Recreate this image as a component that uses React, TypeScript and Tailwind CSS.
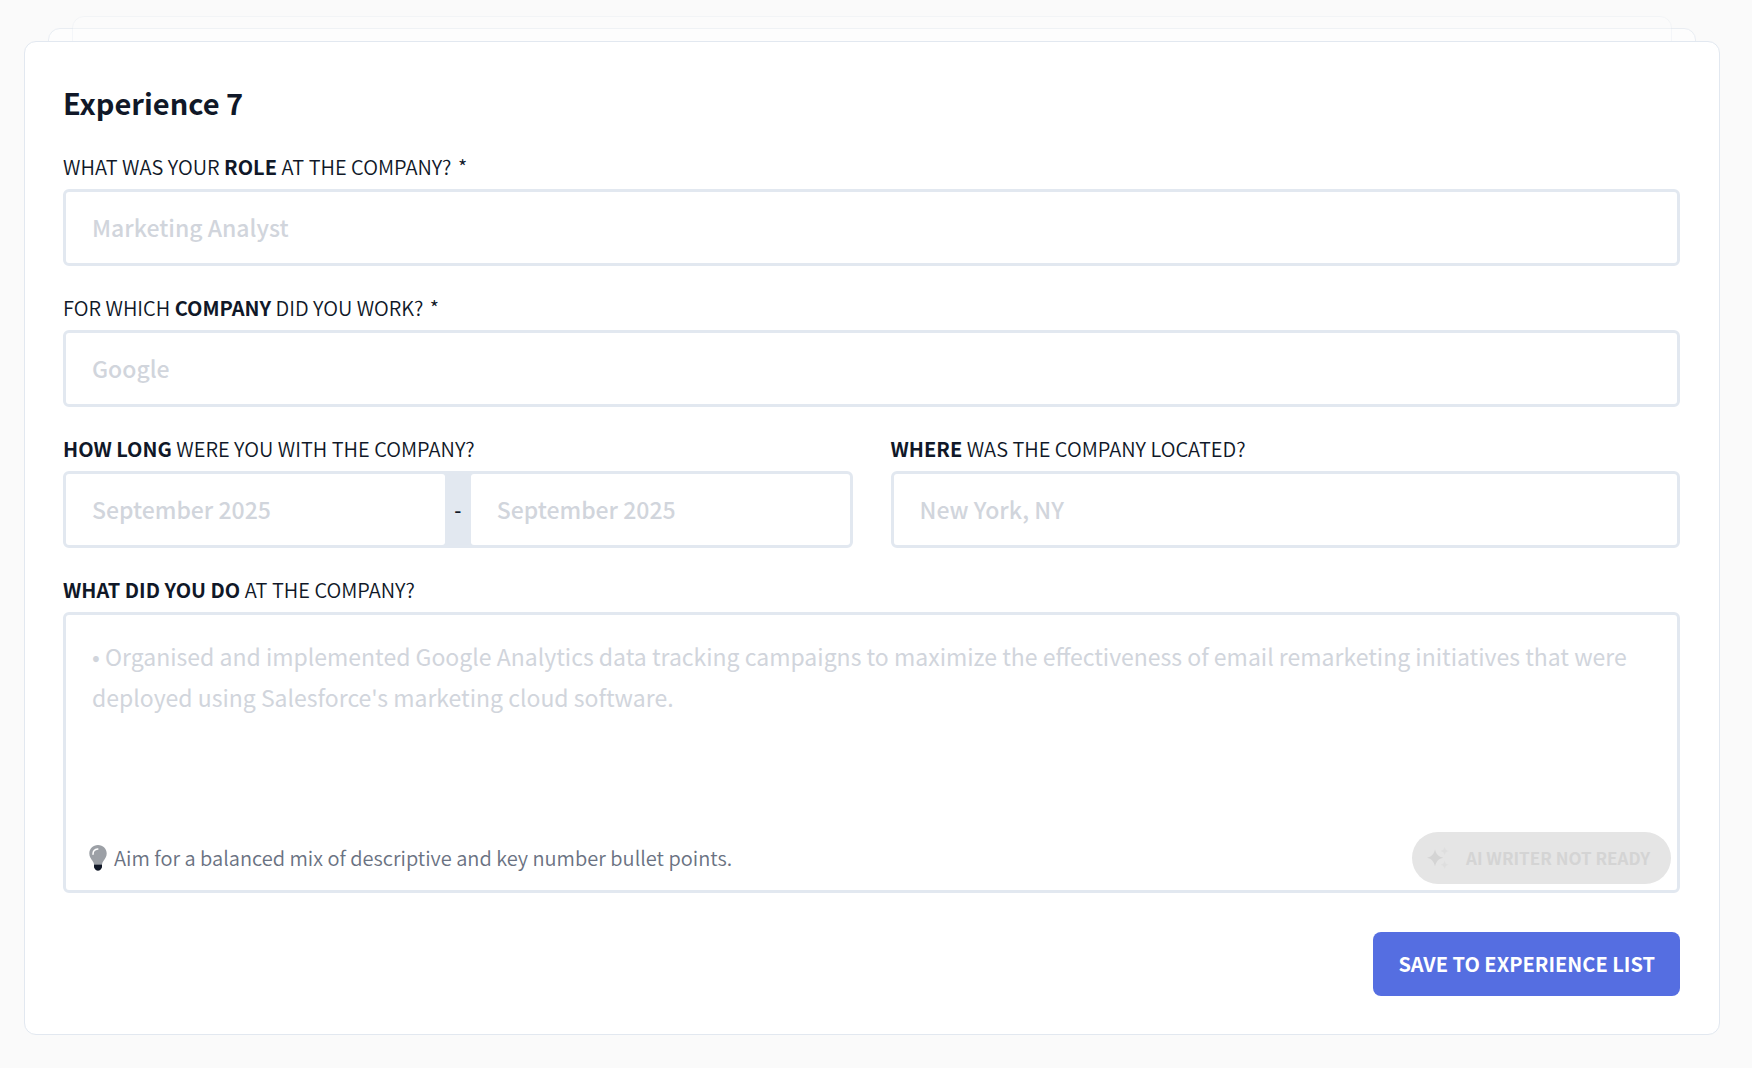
import type { InputHTMLAttributes, ReactNode } from "react";

function FieldLabel({ htmlFor, children }: { htmlFor: string; children: ReactNode }) {
  return (
    <label htmlFor={htmlFor} className="mb-[7px] block text-[20px] leading-[30px] font-[350] uppercase">
      {children}
    </label>
  );
}

function Key({ children }: { children: ReactNode }) {
  return <strong className="font-bold">{children}</strong>;
}

const inputText =
  "w-full min-w-0 bg-white px-[26px] pb-0.5 text-[23px] leading-[36px] font-medium outline-none placeholder:text-gray-300";

function TextField(props: InputHTMLAttributes<HTMLInputElement>) {
  return (
    <input
      type="text"
      {...props}
      className={`${inputText} h-[77px] rounded-md border-3 border-slate-200 focus:border-indigo-400`}
    />
  );
}

function BulbIcon() {
  return (
    <svg viewBox="0 0 18 26" className="h-[26px] w-[18px] shrink-0" aria-hidden="true">
      <path
        d="M9 0C3.9 0 .3 3.8.3 8.6c0 3.2 1.700 5.200 3.100 7.100.9 1.300 1.400 2.400 1.600 3.900h8c.2-1.500.7-2.600 1.600-3.900 1.400-1.900 3.100-3.900 3.100-7.100C17.700 3.800 14.100 0 9 0Z"
        fill="#9ca0a6"
      />
      <path d="M4 9.200C4 6.300 6 4.200 8.800 4" fill="none" stroke="#fff" strokeWidth="1.500" strokeLinecap="round" />
      <path d="M5 19.600h8v2.500c0 .8-.5 1.300-1 1.900-.7 1-1.500 1.700-3 1.700s-2.300-.7-3-1.700c-.5-.6-1-1.100-1-1.900Z" fill="#111827" />
    </svg>
  );
}

function SparklesIcon() {
  return (
    <svg viewBox="0 0 22 22" className="size-[22px] shrink-0" fill="currentColor" aria-hidden="true">
      <path d="M8 2.500c1.300 5 3.500 7.100 8.300 8.300C11.500 12 9.300 14.200 8 19.300 6.700 14.200 4.600 12 0 10.800 4.600 9.600 6.700 7.500 8 2.500Z" />
      <path
        opacity=".4"
        d="M17.600 0c.6 2.400 1.600 3.400 3.900 4-2.300.6-3.300 1.600-3.900 4-.6-2.400-1.600-3.400-3.900-4 2.300-.6 3.300-1.600 3.900-4ZM17.600 13.700c.6 2.400 1.600 3.400 3.900 4-2.300.6-3.300 1.600-3.900 4-.6-2.400-1.600-3.400-3.900-4 2.300-.6 3.300-1.600 3.900-4Z"
      />
    </svg>
  );
}

export default function App() {
  return (
    <main className="min-h-screen bg-[#fafafa] pt-4 pr-8 pb-8 pl-6 font-['Noto_Sans_CJK_KR',sans-serif] text-gray-900">
      <div className="relative pt-[25px]">
        <div className="absolute inset-x-6 top-3 h-24 rounded-xl border border-slate-200 bg-white opacity-70" />
        <div className="absolute inset-x-12 top-0 h-24 rounded-xl border border-slate-200 bg-white opacity-30" />

        <form className="relative flex flex-col gap-[27px] rounded-xl border border-slate-200 bg-white pt-[38px] pr-[39px] pb-[38px] pl-[38px]">
          <h2 className="text-[29px] leading-[45px] font-bold">Experience 7</h2>

          <div>
            <FieldLabel htmlFor="role">
              What was your <Key>role</Key> at the company? <span className="ml-0.5">*</span>
            </FieldLabel>
            <TextField id="role" placeholder="Marketing Analyst" required />
          </div>

          <div>
            <FieldLabel htmlFor="company">
              For which <Key>company</Key> did you work? <span className="ml-0.5">*</span>
            </FieldLabel>
            <TextField id="company" placeholder="Google" required />
          </div>

          <div className="grid grid-cols-2 gap-[38px]">
            <div>
              <FieldLabel htmlFor="start">
                <Key>How long</Key> were you with the company?
              </FieldLabel>
              <div className="flex h-[77px] rounded-md border-3 border-slate-200 bg-slate-200">
                <input id="start" type="text" placeholder="September 2025" className={`${inputText} rounded-[3px]`} />
                <span className="w-[26px] shrink-0 self-center text-center text-[20px] leading-[30px] font-medium">-</span>
                <input
                  type="text"
                  aria-label="End date"
                  placeholder="September 2025"
                  className={`${inputText} rounded-[3px]`}
                />
              </div>
            </div>
            <div>
              <FieldLabel htmlFor="location">
                <Key>Where</Key> was the company located?
              </FieldLabel>
              <TextField id="location" placeholder="New York, NY" />
            </div>
          </div>

          <div>
            <FieldLabel htmlFor="summary">
              <Key>What did you do</Key> at the company?
            </FieldLabel>
            <div className="rounded-md border-3 border-slate-200 bg-white">
              <textarea
                id="summary"
                placeholder="• Organised and implemented Google Analytics data tracking campaigns to maximize the effectiveness of email remarketing initiatives that were deployed using Salesforce's marketing cloud software."
                className="block h-[217px] w-full resize-none px-[26px] pt-[21px] text-[23px] leading-[41px] outline-none placeholder:text-gray-300"
              />
              <div className="flex items-center justify-between pr-1.5 pb-1.5 pl-[23px]">
                <p className="flex items-center gap-[7px] text-[20px] leading-[30px] font-[350] text-gray-500">
                  <BulbIcon />
                  Aim for a balanced mix of descriptive and key number bullet points.
                </p>
                <button
                  type="button"
                  disabled
                  className="flex h-[52px] items-center gap-[17px] rounded-full bg-[#e5e5e5] pr-[21px] pl-[15px] text-[17px] leading-6 font-bold text-[#d4d4d4] uppercase"
                >
                  <SparklesIcon />
                  AI writer not ready
                </button>
              </div>
            </div>
          </div>

          <button
            type="submit"
            className="mt-3 h-16 self-end rounded-lg bg-[#556ee1] px-[25px] text-[20px] leading-[30px] font-bold text-white uppercase"
          >
            Save to experience list
          </button>
        </form>
      </div>
    </main>
  );
}
